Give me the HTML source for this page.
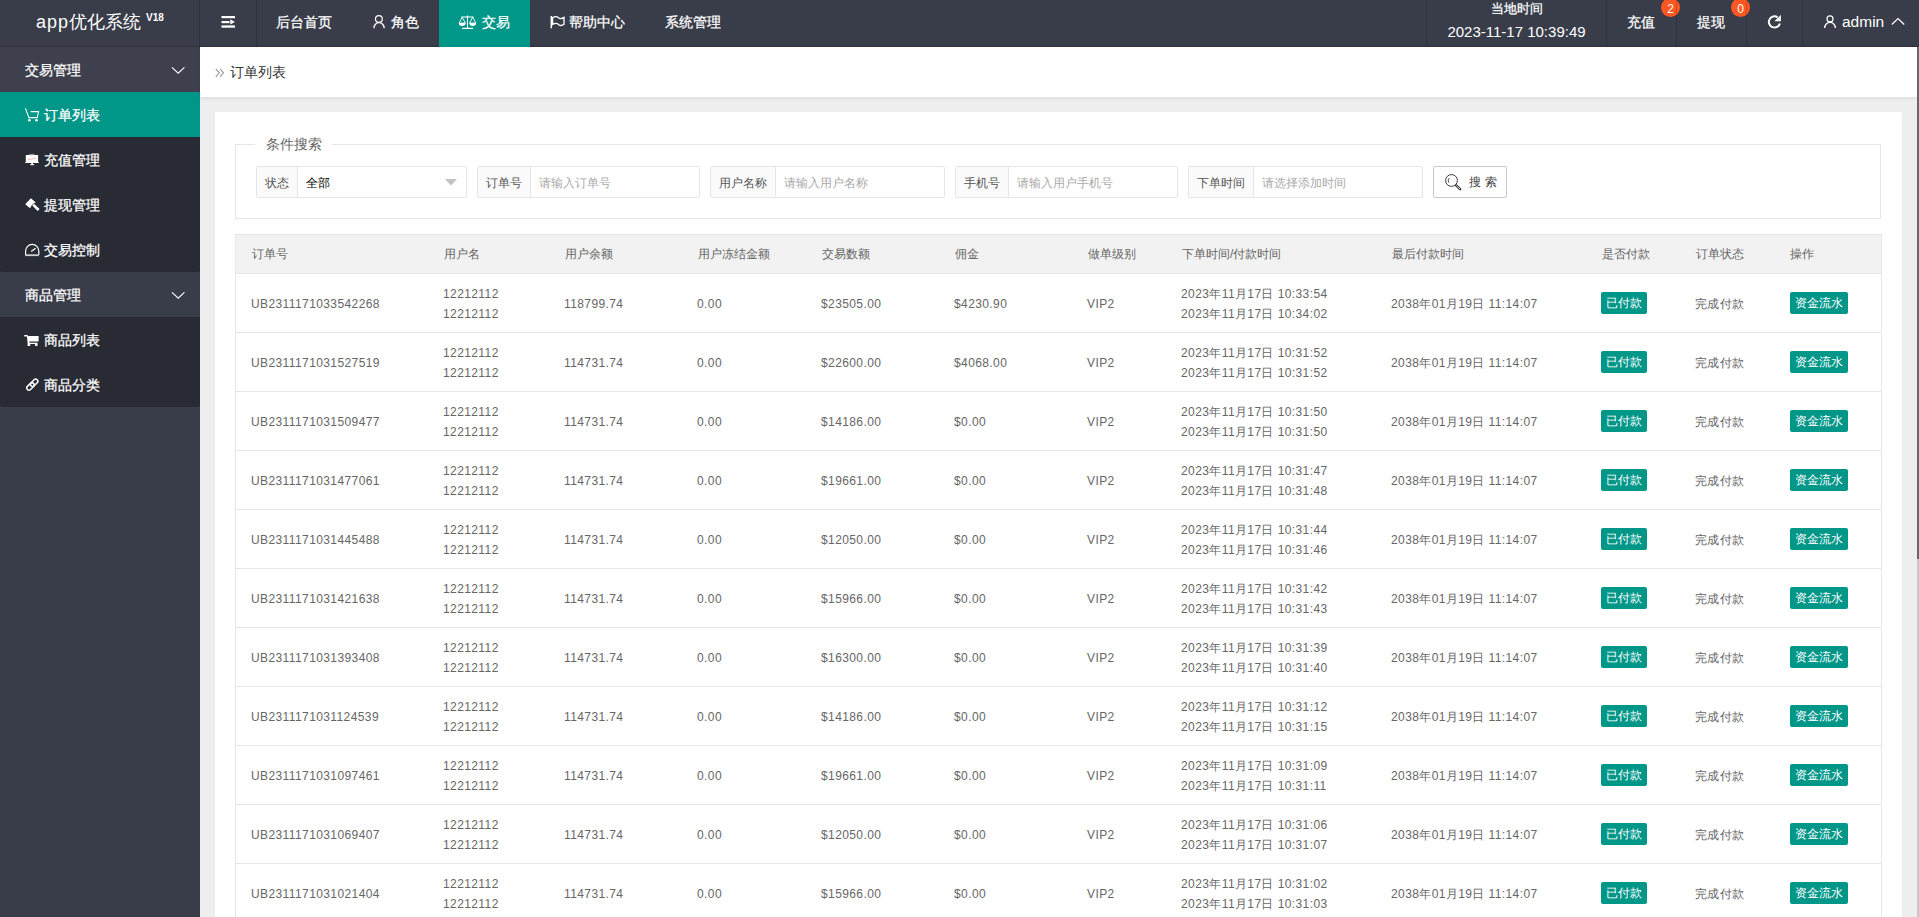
<!DOCTYPE html>
<html><head><meta charset="utf-8"><title>订单列表</title>
<style>
*{margin:0;padding:0;box-sizing:border-box}
html,body{width:1919px;height:917px;overflow:hidden}
body{font-family:"Liberation Sans",sans-serif;background:#eeeeee;position:relative;color:#666}
.abs{position:absolute}
#hdr{position:absolute;left:0;top:0;width:1919px;height:47px;background:#393d49;border-bottom:1px solid #30333d}
#hdr .vl{position:absolute;top:0;width:1px;height:46px;background:rgba(0,0,0,.17)}
#hdr .t{position:absolute;top:-1px;height:46px;line-height:46px;color:#fff;font-size:14px;white-space:nowrap;-webkit-text-stroke:.25px #fff}
.logo{position:absolute;left:36px;top:-4px;height:46px;line-height:44px;color:#fff;font-size:18px;white-space:nowrap}
.logo sup{font-size:10px;font-weight:bold;position:relative;top:0px;margin-left:5px}
.act{position:absolute;left:439px;top:0;width:91px;height:47px;background:#009688}
.badge{position:absolute;top:-2px;width:19px;height:19px;border-radius:10px;background:#ff5722;color:#fff;font-size:12px;line-height:23px;text-align:center}
#side{position:absolute;left:0;top:47px;width:200px;height:870px;background:#393d49}
.si{position:absolute;left:0;width:200px;height:45px;line-height:45px;color:#fff;font-size:14px;white-space:nowrap;-webkit-text-stroke:.25px #fff}
.si .tx{position:absolute;left:25px;top:1px}
.si.c .tx{left:44px}
.si svg{position:absolute;left:25px;top:15px}
.child{position:absolute;left:0;width:200px;background:#282b33;border-radius:0 0 2px 2px}
#bc{position:absolute;left:200px;top:47px;width:1717px;height:50px;background:#fff;box-shadow:0 1px 4px rgba(0,0,0,.1)}
#card{position:absolute;left:215px;top:112px;width:1687px;height:820px;background:#fff;box-shadow:0 1px 2px rgba(0,0,0,.05)}
#fs{position:absolute;left:20px;top:32px;width:1646px;height:75px;border:1px solid #e6e6e6}
#lg{position:absolute;left:40px;top:20px;width:77px;height:24px;background:#fff;color:#666;font-size:14px;line-height:24px;padding-left:11px;white-space:nowrap}
.ig{position:absolute;top:54px;height:32px;border:1px solid #e6e6e6;border-radius:2px;background:#fff;white-space:nowrap}
.ig .lb{position:absolute;left:0;top:0;height:30px;background:#fafafa;border-right:1px solid #e6e6e6;color:#555;font-size:12px;line-height:32px;padding:0 8px}
.ig .ph{position:absolute;top:1px;line-height:30px;font-size:12px;color:#aaa}
.sbtn{position:absolute;left:1218px;top:54px;width:74px;height:32px;border:1px solid #c9c9c9;border-radius:2px;background:#fff;color:#444;font-size:12px;line-height:30px}
#tbl{position:absolute;left:20px;top:122px;width:1647px;height:760px;border:1px solid #e6e6e6;border-bottom:none}
.thead{position:absolute;left:-1px;top:-1px;width:1647px;height:40px;background:#f2f2f2;border:1px solid #e6e6e6}
.th{position:absolute;top:0;line-height:38px;font-size:12px;color:#666;white-space:nowrap}
.tr{position:absolute;left:-1px;width:1647px;height:59px;border-bottom:1px solid #e6e6e6}
.td{position:absolute;top:1px;line-height:58px;font-size:12px;color:#666;white-space:nowrap;letter-spacing:.4px}
.td2{position:absolute;top:10px;line-height:20px;font-size:12px;color:#666;white-space:nowrap;letter-spacing:.4px}
.btn{position:absolute;top:18px;height:22px;line-height:22px;background:#009688;color:#fff;font-size:12px;border-radius:2px;text-align:center}
.b1{width:46px}.b2{width:58px}
#sb{position:absolute;left:1917px;top:47px;width:2px;height:870px;background:#cacaca}
#sbt{position:absolute;left:1917px;top:47px;width:2px;height:512px;background:#686868}
</style></head><body>
<svg style="position:absolute;left:0;top:0;z-index:5;pointer-events:none" width="1919" height="917" viewBox="0 0 1919 917">
<g fill="#fff">
 <!-- hamburger -->
 <rect x="221.5" y="16" width="13.5" height="2.2"/>
 <rect x="221.5" y="21" width="8" height="2.2"/>
 <path d="M230.3 19.3 L234.8 22.1 L230.3 24.6 Z"/>
 <rect x="221.5" y="25.4" width="13.5" height="2.3"/>
</g>
<g fill="none" stroke="#fff">
 <!-- user role -->
 <circle cx="378.9" cy="19" r="3.4" stroke-width="1.2"/>
 <path d="M373.9 28.2 A5.1 5.6 0 0 1 384.2 28.2" stroke-width="1.3"/>
 <!-- scale -->
 <path d="M461.3 17 H473.6" stroke-width="1"/>
 <path d="M467.5 16 V28.3" stroke-width="1.1"/>
 <path d="M462.2 28.4 H473" stroke-width="1.3"/>
 <path d="M462.2 17.2 L459.2 23.1 H465.3 Z M472.7 17.2 L469.7 23.1 H475.8 Z" stroke-width="0.9"/>
 <!-- flag -->
 <path d="M551.3 16 V28.3" stroke-width="1.5"/>
 <path d="M552.6 17.6 C554.8 16.4 557 16.4 558.5 17.7 C560 19 562.2 18.6 564 17.4 V24.3 C562.2 25.6 560 25.8 558.5 24.4 C557 23.1 554.8 23.3 552.6 24.5 Z" stroke-width="1.3"/>
 <!-- refresh -->
 <path d="M1779.9 23.4 A5.6 5.6 0 1 1 1777.6 17.3" stroke-width="2"/>
 <!-- admin user -->
 <circle cx="1830" cy="18.9" r="3" stroke-width="1.2"/>
 <path d="M1824.7 28 A5.3 5.6 0 0 1 1835.3 28" stroke-width="1.3"/>
 <path d="M1891.8 24.5 L1898 18.6 L1904.2 24.5" stroke-width="1.2"/>
 <!-- sidebar chevrons -->
 <path d="M172 67.4 L178.2 73.2 L184.4 67.4" stroke-width="1.1"/>
 <path d="M172 292.4 L178.2 298.2 L184.4 292.4" stroke-width="1.1"/>
</g>
<g fill="#fff">
 <path d="M1774.4 21.2 L1780.9 14.8 V21.2 Z"/>
 <path d="M458.8 23 A3.25 2.9 0 0 0 465.6 23 Z M469.4 23 A3.25 2.9 0 0 0 476.1 23 Z"/>
 <circle cx="467.5" cy="16.3" r="0.9"/>
</g>
<!-- sidebar icons -->
<g fill="none" stroke="#fff">
 <path d="M25.4 108.4 L28.9 117.6 H37.2 L38.6 111.6 H30.6" stroke-width="1.05"/>
 <path d="M25.4 196.1" />
 <path d="M25.6 255 V251 A6.6 6.6 0 0 1 38.8 251 V255" stroke-width="1.2"/>
 <path d="M31.2 251.6 L35.6 248.2" stroke-width="1.3"/>
 <path d="M30.8 385.2 L33.3 382.7 A2.1 2.1 0 0 1 37.1 384.6 L34.6 387.1 M33.2 385.4 L30.7 387.9 A2.1 2.1 0 0 1 26.9 386 L29.4 383.5 M29.6 386.6 L34.4 381.9" stroke-width="0" />
</g>
<g fill="#fff">
 <circle cx="29.3" cy="120.2" r="1.3"/><circle cx="36.5" cy="120.2" r="1.3"/>
 <!-- monitor -->
 <rect x="25.8" y="155" width="12.3" height="7.8"/>
 <rect x="29.4" y="153.9" width="5" height="1.3" fill="#9a9a9a"/>
 <rect x="25.2" y="162" width="13.6" height="0.9"/>
 <rect x="31.3" y="162.8" width="1.6" height="1.6"/>
 <rect x="30.2" y="164.1" width="3.9" height="1.1"/>
 <!-- gavel -->
 <path d="M25.2 204.2 L30.9 198.3 L35.8 202.6 L33.5 203.6 L31.4 205.7 L30.1 208.3 Z"/>
 <path d="M32.3 205.4 L34 203.7 L39.6 209.1 L37.6 211 Z"/>
 <!-- gauge base -->
 <rect x="25.3" y="254.3" width="13.5" height="1.8" fill="#d0d0d0"/>
 <!-- filled cart -->
 <path d="M24.2 335 H27.4 L28 336 H38.6 V341.5 H29.3 L29.5 342.7 H37.5 V346 H35.1 V344 H30.2 V346 H27.6 V342.5 L26.9 336.5 H24.2 Z"/>
</g>
<g fill="none" stroke="#fff" stroke-width="1.5" transform="rotate(-45 32.3 384.6)">
 <rect x="30.6" y="382.4" width="8.6" height="4.4" rx="2.2"/>
 <rect x="25.4" y="382.4" width="8.6" height="4.4" rx="2.2"/>
</g>
<g stroke="#e44" stroke-width="0.7" fill="none" opacity="0.6"><path d="M28 159.8 L30 159 L31.5 159.8 L34 158 L36 158.5"/></g>
</svg>

<div id="hdr">
  <div class="logo"><span style="letter-spacing:1px">app</span>优化系统<sup>V18</sup></div>
  <div class="vl" style="left:199px"></div>
  <div class="vl" style="left:256px"></div>
  
  <div class="t" style="left:276px">后台首页</div>
  
  <div class="t" style="left:391px">角色</div>
  <div class="act"></div>
  
  <div class="t" style="left:482px">交易</div>
  
  <div class="t" style="left:569px">帮助中心</div>
  <div class="t" style="left:665px">系统管理</div>

  <div class="vl" style="left:1426px"></div>
  <div class="t" style="left:1427px;width:179px;text-align:center;line-height:18px;top:0px;font-size:13px">当地时间</div>
  <div class="t" style="left:1427px;width:179px;text-align:center;line-height:20px;top:22px;font-size:15px;-webkit-text-stroke:0">2023-11-17 10:39:49</div>
  <div class="vl" style="left:1606px"></div>
  <div class="t" style="left:1627px">充值</div>
  <div class="badge" style="left:1661px">2</div>
  <div class="vl" style="left:1676px"></div>
  <div class="t" style="left:1697px">提现</div>
  <div class="badge" style="left:1731px">0</div>
  <div class="vl" style="left:1746px"></div>
  
  <div class="vl" style="left:1802px"></div>
  
  <div class="t" style="left:1842px;font-size:15.5px;-webkit-text-stroke:0">admin</div>
  
</div>

<div id="side">
  <div class="si" style="top:0;background:#3e414d"><span class="tx">交易管理</span></div>
  <div class="child" style="top:45px;height:180px"></div>
  <div class="si c" style="top:45px;background:#009688"><span class="tx">订单列表</span></div>
  <div class="si c" style="top:90px"><span class="tx">充值管理</span></div>
  <div class="si c" style="top:135px"><span class="tx">提现管理</span></div>
  <div class="si c" style="top:180px"><span class="tx">交易控制</span></div>
  <div class="si" style="top:225px"><span class="tx">商品管理</span></div>
  <div class="child" style="top:270px;height:90px"></div>
  <div class="si c" style="top:270px"><span class="tx">商品列表</span></div>
  <div class="si c" style="top:315px"><span class="tx">商品分类</span></div>
</div>

<div id="bc">
  <svg class="abs" style="left:15px;top:21px" width="10" height="10" viewBox="0 0 10 10"><path d="M0.8 0.8 L4.3 4.8 L0.8 8.8 M5 0.8 L8.5 4.8 L5 8.8" stroke="#999" stroke-width="1.1" fill="none"/></svg>
  <div class="abs" style="left:30px;top:0;line-height:50px;font-size:14px;color:#333;white-space:nowrap">订单列表</div>
</div>

<div id="card">
  <div id="fs"></div>
  <div id="lg">条件搜索</div>
  <div class="ig" style="left:41px;width:211px"><span class="lb">状态</span><span class="ph" style="left:49px;color:#000">全部</span><svg class="abs" style="left:188px;top:12px" width="12" height="7" viewBox="0 0 12 7"><path d="M0 0 H12 L6 6.5Z" fill="#c2c2c2"/></svg></div>
  <div class="ig" style="left:262px;width:223px"><span class="lb">订单号</span><span class="ph" style="left:61px">请输入订单号</span></div>
  <div class="ig" style="left:495px;width:235px"><span class="lb">用户名称</span><span class="ph" style="left:73px">请输入用户名称</span></div>
  <div class="ig" style="left:740px;width:223px"><span class="lb">手机号</span><span class="ph" style="left:61px">请输入用户手机号</span></div>
  <div class="ig" style="left:973px;width:235px"><span class="lb">下单时间</span><span class="ph" style="left:73px">请选择添加时间</span></div>
  <div class="sbtn"><svg class="abs" style="left:11px;top:7px" width="17" height="17" viewBox="0 0 17 17"><circle cx="6.5" cy="6.5" r="5.9" fill="none" stroke="#333" stroke-width="0.95"/><path d="M11.2 11.4 L15.1 15.2" stroke="#333" stroke-width="2.4" stroke-linecap="round"/><path d="M11.4 11.6 L15 15" stroke="#fff" stroke-width="0.8"/><path d="M4.3 4.2 A3.6 3.6 0 0 0 3.8 8.5" stroke="#333" stroke-width="0.9" fill="none"/></svg><span class="abs" style="left:35px;top:0;letter-spacing:4px">搜索</span></div>
  <div id="tbl">
<div class="thead">
<span class="th" style="left:16px">订单号</span>
<span class="th" style="left:208px">用户名</span>
<span class="th" style="left:329px">用户余额</span>
<span class="th" style="left:462px">用户冻结金额</span>
<span class="th" style="left:586px">交易数额</span>
<span class="th" style="left:719px">佣金</span>
<span class="th" style="left:852px">做单级别</span>
<span class="th" style="left:946px">下单时间/付款时间</span>
<span class="th" style="left:1156px">最后付款时间</span>
<span class="th" style="left:1366px">是否付款</span>
<span class="th" style="left:1460px">订单状态</span>
<span class="th" style="left:1554px">操作</span>
</div>
<div class="tr" style="top:39px">
<span class="td" style="left:16px">UB2311171033542268</span>
<span class="td2" style="left:208px">12212112<br>12212112</span>
<span class="td" style="left:329px">118799.74</span>
<span class="td" style="left:462px">0.00</span>
<span class="td" style="left:586px">$23505.00</span>
<span class="td" style="left:719px">$4230.90</span>
<span class="td" style="left:852px">VIP2</span>
<span class="td2" style="left:946px">2023年11月17日 10:33:54<br>2023年11月17日 10:34:02</span>
<span class="td" style="left:1156px">2038年01月19日 11:14:07</span>
<span class="btn b1" style="left:1366px">已付款</span>
<span class="td" style="left:1460px">完成付款</span>
<span class="btn b2" style="left:1555px">资金流水</span>
</div>
<div class="tr" style="top:98px">
<span class="td" style="left:16px">UB2311171031527519</span>
<span class="td2" style="left:208px">12212112<br>12212112</span>
<span class="td" style="left:329px">114731.74</span>
<span class="td" style="left:462px">0.00</span>
<span class="td" style="left:586px">$22600.00</span>
<span class="td" style="left:719px">$4068.00</span>
<span class="td" style="left:852px">VIP2</span>
<span class="td2" style="left:946px">2023年11月17日 10:31:52<br>2023年11月17日 10:31:52</span>
<span class="td" style="left:1156px">2038年01月19日 11:14:07</span>
<span class="btn b1" style="left:1366px">已付款</span>
<span class="td" style="left:1460px">完成付款</span>
<span class="btn b2" style="left:1555px">资金流水</span>
</div>
<div class="tr" style="top:157px">
<span class="td" style="left:16px">UB2311171031509477</span>
<span class="td2" style="left:208px">12212112<br>12212112</span>
<span class="td" style="left:329px">114731.74</span>
<span class="td" style="left:462px">0.00</span>
<span class="td" style="left:586px">$14186.00</span>
<span class="td" style="left:719px">$0.00</span>
<span class="td" style="left:852px">VIP2</span>
<span class="td2" style="left:946px">2023年11月17日 10:31:50<br>2023年11月17日 10:31:50</span>
<span class="td" style="left:1156px">2038年01月19日 11:14:07</span>
<span class="btn b1" style="left:1366px">已付款</span>
<span class="td" style="left:1460px">完成付款</span>
<span class="btn b2" style="left:1555px">资金流水</span>
</div>
<div class="tr" style="top:216px">
<span class="td" style="left:16px">UB2311171031477061</span>
<span class="td2" style="left:208px">12212112<br>12212112</span>
<span class="td" style="left:329px">114731.74</span>
<span class="td" style="left:462px">0.00</span>
<span class="td" style="left:586px">$19661.00</span>
<span class="td" style="left:719px">$0.00</span>
<span class="td" style="left:852px">VIP2</span>
<span class="td2" style="left:946px">2023年11月17日 10:31:47<br>2023年11月17日 10:31:48</span>
<span class="td" style="left:1156px">2038年01月19日 11:14:07</span>
<span class="btn b1" style="left:1366px">已付款</span>
<span class="td" style="left:1460px">完成付款</span>
<span class="btn b2" style="left:1555px">资金流水</span>
</div>
<div class="tr" style="top:275px">
<span class="td" style="left:16px">UB2311171031445488</span>
<span class="td2" style="left:208px">12212112<br>12212112</span>
<span class="td" style="left:329px">114731.74</span>
<span class="td" style="left:462px">0.00</span>
<span class="td" style="left:586px">$12050.00</span>
<span class="td" style="left:719px">$0.00</span>
<span class="td" style="left:852px">VIP2</span>
<span class="td2" style="left:946px">2023年11月17日 10:31:44<br>2023年11月17日 10:31:46</span>
<span class="td" style="left:1156px">2038年01月19日 11:14:07</span>
<span class="btn b1" style="left:1366px">已付款</span>
<span class="td" style="left:1460px">完成付款</span>
<span class="btn b2" style="left:1555px">资金流水</span>
</div>
<div class="tr" style="top:334px">
<span class="td" style="left:16px">UB2311171031421638</span>
<span class="td2" style="left:208px">12212112<br>12212112</span>
<span class="td" style="left:329px">114731.74</span>
<span class="td" style="left:462px">0.00</span>
<span class="td" style="left:586px">$15966.00</span>
<span class="td" style="left:719px">$0.00</span>
<span class="td" style="left:852px">VIP2</span>
<span class="td2" style="left:946px">2023年11月17日 10:31:42<br>2023年11月17日 10:31:43</span>
<span class="td" style="left:1156px">2038年01月19日 11:14:07</span>
<span class="btn b1" style="left:1366px">已付款</span>
<span class="td" style="left:1460px">完成付款</span>
<span class="btn b2" style="left:1555px">资金流水</span>
</div>
<div class="tr" style="top:393px">
<span class="td" style="left:16px">UB2311171031393408</span>
<span class="td2" style="left:208px">12212112<br>12212112</span>
<span class="td" style="left:329px">114731.74</span>
<span class="td" style="left:462px">0.00</span>
<span class="td" style="left:586px">$16300.00</span>
<span class="td" style="left:719px">$0.00</span>
<span class="td" style="left:852px">VIP2</span>
<span class="td2" style="left:946px">2023年11月17日 10:31:39<br>2023年11月17日 10:31:40</span>
<span class="td" style="left:1156px">2038年01月19日 11:14:07</span>
<span class="btn b1" style="left:1366px">已付款</span>
<span class="td" style="left:1460px">完成付款</span>
<span class="btn b2" style="left:1555px">资金流水</span>
</div>
<div class="tr" style="top:452px">
<span class="td" style="left:16px">UB2311171031124539</span>
<span class="td2" style="left:208px">12212112<br>12212112</span>
<span class="td" style="left:329px">114731.74</span>
<span class="td" style="left:462px">0.00</span>
<span class="td" style="left:586px">$14186.00</span>
<span class="td" style="left:719px">$0.00</span>
<span class="td" style="left:852px">VIP2</span>
<span class="td2" style="left:946px">2023年11月17日 10:31:12<br>2023年11月17日 10:31:15</span>
<span class="td" style="left:1156px">2038年01月19日 11:14:07</span>
<span class="btn b1" style="left:1366px">已付款</span>
<span class="td" style="left:1460px">完成付款</span>
<span class="btn b2" style="left:1555px">资金流水</span>
</div>
<div class="tr" style="top:511px">
<span class="td" style="left:16px">UB2311171031097461</span>
<span class="td2" style="left:208px">12212112<br>12212112</span>
<span class="td" style="left:329px">114731.74</span>
<span class="td" style="left:462px">0.00</span>
<span class="td" style="left:586px">$19661.00</span>
<span class="td" style="left:719px">$0.00</span>
<span class="td" style="left:852px">VIP2</span>
<span class="td2" style="left:946px">2023年11月17日 10:31:09<br>2023年11月17日 10:31:11</span>
<span class="td" style="left:1156px">2038年01月19日 11:14:07</span>
<span class="btn b1" style="left:1366px">已付款</span>
<span class="td" style="left:1460px">完成付款</span>
<span class="btn b2" style="left:1555px">资金流水</span>
</div>
<div class="tr" style="top:570px">
<span class="td" style="left:16px">UB2311171031069407</span>
<span class="td2" style="left:208px">12212112<br>12212112</span>
<span class="td" style="left:329px">114731.74</span>
<span class="td" style="left:462px">0.00</span>
<span class="td" style="left:586px">$12050.00</span>
<span class="td" style="left:719px">$0.00</span>
<span class="td" style="left:852px">VIP2</span>
<span class="td2" style="left:946px">2023年11月17日 10:31:06<br>2023年11月17日 10:31:07</span>
<span class="td" style="left:1156px">2038年01月19日 11:14:07</span>
<span class="btn b1" style="left:1366px">已付款</span>
<span class="td" style="left:1460px">完成付款</span>
<span class="btn b2" style="left:1555px">资金流水</span>
</div>
<div class="tr" style="top:629px">
<span class="td" style="left:16px">UB2311171031021404</span>
<span class="td2" style="left:208px">12212112<br>12212112</span>
<span class="td" style="left:329px">114731.74</span>
<span class="td" style="left:462px">0.00</span>
<span class="td" style="left:586px">$15966.00</span>
<span class="td" style="left:719px">$0.00</span>
<span class="td" style="left:852px">VIP2</span>
<span class="td2" style="left:946px">2023年11月17日 10:31:02<br>2023年11月17日 10:31:03</span>
<span class="td" style="left:1156px">2038年01月19日 11:14:07</span>
<span class="btn b1" style="left:1366px">已付款</span>
<span class="td" style="left:1460px">完成付款</span>
<span class="btn b2" style="left:1555px">资金流水</span>
</div>  </div>
</div>
<div id="sb"></div><div id="sbt"></div>
</body></html>
